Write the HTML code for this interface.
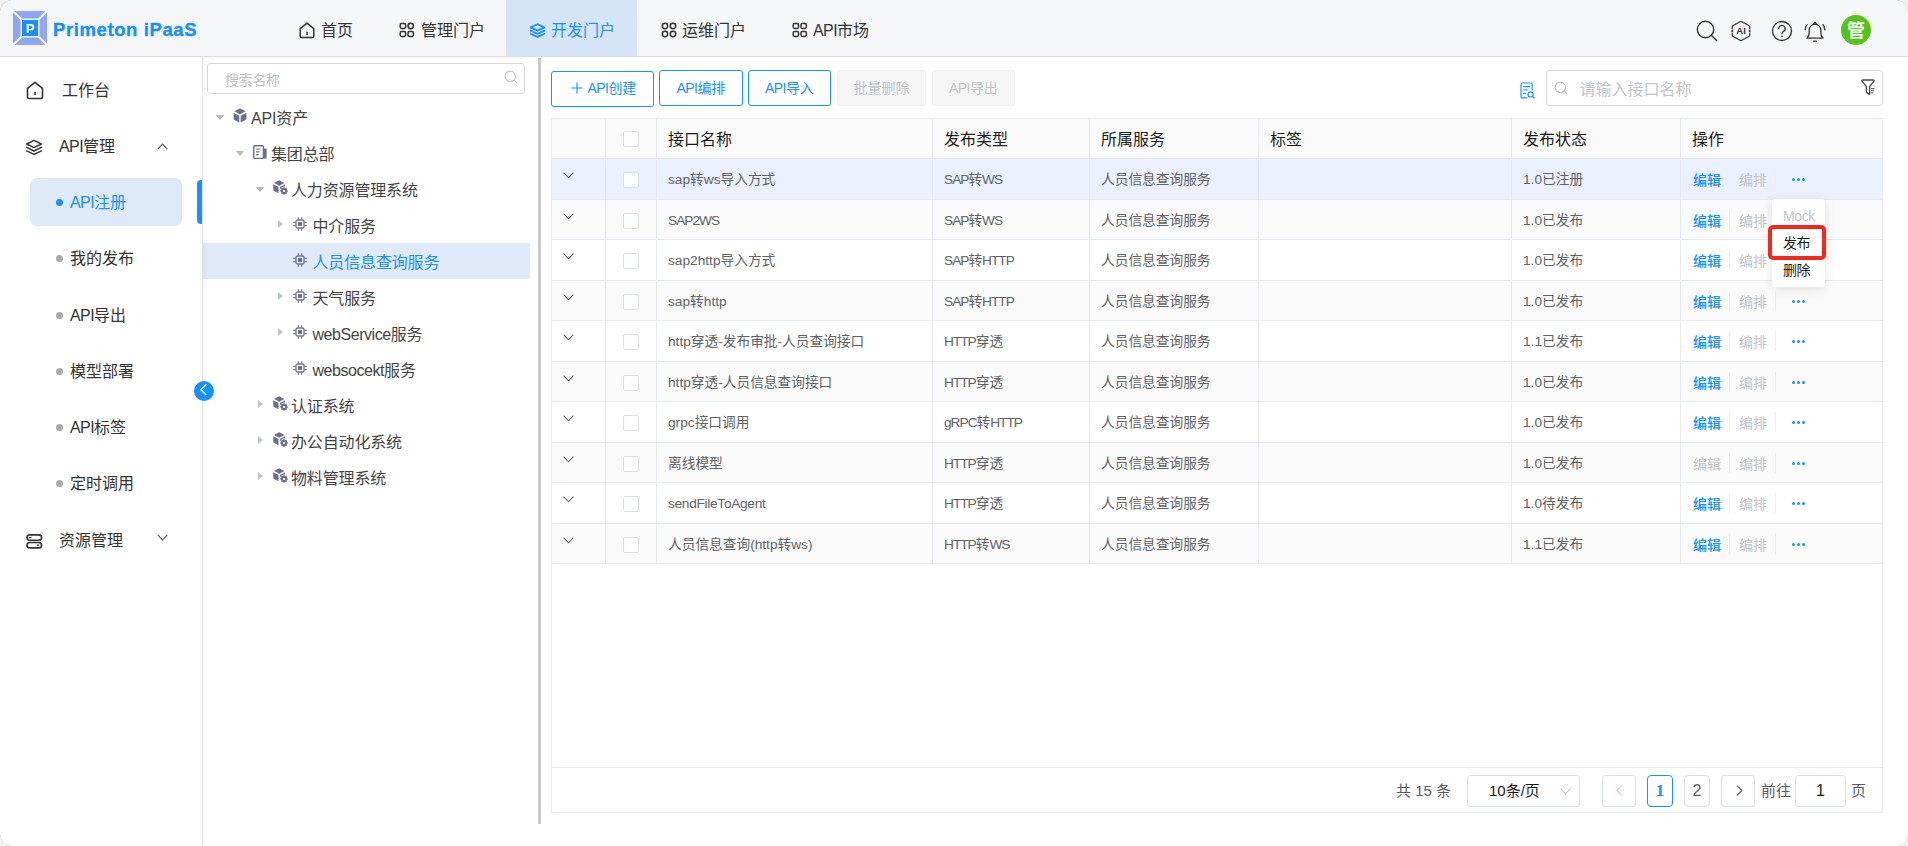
<!DOCTYPE html>
<html lang="zh-CN">
<head>
<meta charset="utf-8">
<title>Primeton iPaaS</title>
<style>
*{box-sizing:border-box;margin:0;padding:0}
html,body{width:1908px;height:846px;overflow:hidden;background:#fff}
body{font-family:"Liberation Sans","Noto Sans CJK SC",sans-serif;color:#333;position:relative;font-size:14px}
svg{display:block}
.abs{position:absolute}
/* header */
#hd{position:absolute;left:0;top:0;width:1908px;height:57px;background:#f5f6f8;border-bottom:1px solid #dcdde0;box-shadow:0 1px 2px rgba(0,0,0,.03);z-index:5}
#logo{position:absolute;left:13px;top:11px;width:34px;height:34px}
#brand{position:absolute;left:53px;top:17.5px;font-size:18.5px;font-weight:bold;color:#1890ff;line-height:24px;letter-spacing:.6px;white-space:nowrap;-webkit-text-stroke:.35px #1890ff}
.nav{position:absolute;top:3px;height:56px;line-height:56px;font-size:16px;color:#333;white-space:nowrap}
.nav svg{position:absolute;top:19px;left:0}
.nav.act{color:#1890ff}
#navbg{position:absolute;left:506px;top:0;width:131px;height:56px;background:#d5e5f7}
.hic{position:absolute;top:0}
#avatar{position:absolute;left:1841px;top:15px;width:30px;height:30px;border-radius:50%;background:#52c41a;color:#fff;font-size:18px;font-weight:bold;line-height:33px;text-align:center}
/* sidebar */
#sb{position:absolute;left:0;top:57px;width:203px;height:789px;background:#fff;border-right:1px solid #e4e5e8;box-shadow:1px 0 4px rgba(0,0,0,.06);z-index:3}
.mi{position:absolute;left:0;height:24px;line-height:26px;font-size:16px;color:#333;white-space:nowrap}
.mi svg{position:absolute}
.dot{position:absolute;left:56px;width:7px;height:7px;margin-top:-.5px;border-radius:50%;background:#aaa}
#actbg{position:absolute;left:30px;top:121px;width:152px;height:48px;border-radius:7px;background:#dfeaf8}
#actbar{position:absolute;left:197px;top:123px;width:5px;height:44px;border-radius:4px 0 0 4px;background:#1890ff}
#collapse{position:absolute;left:194px;top:381px;width:20px;height:20px;border-radius:50%;background:#1890ff;z-index:9}

/* tree */
#tp{position:absolute;left:204px;top:57px;width:334px;height:789px;background:#fff}
#tsearch{position:absolute;left:3px;top:6px;width:318px;height:31px;border:1px solid #d9d9d9;border-radius:3px;background:#fff}
#tsearch span{position:absolute;left:17px;top:6px;font-size:14px;line-height:20px;color:#bfbfbf;letter-spacing:-.3px}
#tsearch svg{position:absolute;left:296px;top:6px}
.tr{position:absolute;left:0;width:326px;height:36px;line-height:36px;font-size:16px;color:#444;white-space:nowrap;letter-spacing:-.15px}
.tr.sel{background:#dfe9f7;color:#1890ff;box-shadow:-1px 0 0 #dfe9f7}
.tr i{position:absolute;top:0;width:0;height:0}
.tr i.dn{top:16px;border-left:4.5px solid transparent;border-right:4.5px solid transparent;border-top:5px solid #b4b8c0}
.tr i.rt{top:13px;border-top:4.5px solid transparent;border-bottom:4.5px solid transparent;border-left:5.5px solid #c0c4cc}
.tr svg{position:absolute;top:11px}
.tr span{position:absolute;top:2px}
#split{position:absolute;left:538px;top:58px;width:3px;height:766px;background:#c8c8c8}

/* main */
#mn{position:absolute;left:541px;top:57px;width:1367px;height:789px;background:#fff}
.btn{position:absolute;top:13px;height:36px;border:1px solid #1890ff;border-radius:3px;color:#1890ff;font-size:14px;line-height:34px;text-align:center;background:#fff;white-space:nowrap}
.btn.b1{top:14px;line-height:32px}
u{text-decoration:none;letter-spacing:-.6px}
u.l{letter-spacing:-.45px}
.tr u{letter-spacing:-.15px}
.tr u.l{letter-spacing:-.45px}
.r u{letter-spacing:-1px}
.r u.l{letter-spacing:0}
.r.n8 u.l{letter-spacing:-.3px}
.btn.dis{border-color:#f0f0f0;background:#f5f5f5;color:#c0c4cc}
#qicon{position:absolute;left:979px;top:25px}
#qin{position:absolute;left:1005px;top:13px;width:337px;height:36px;border:1px solid #d9d9d9;border-radius:3px;background:#fff}
#qin span{position:absolute;left:32.5px;top:8px;font-size:16px;line-height:22px;color:#c0c4cc}
#qin svg{position:absolute}
#tb{position:absolute;left:10px;top:61px;width:1332px;height:695px;border:1px solid #e6e9f3}
#th{position:absolute;left:0;top:0;width:1330px;height:40px;background:#fafafa;border-bottom:1px solid #e6e9f3;font-size:16px;color:#1a1a1a}
.r{position:absolute;left:0;width:1330px;height:40.5px;border-bottom:1px solid #e6e9f3;font-size:13.7px;color:#606266;background:#fff}
.r.s{background:#fafafa}
.r.h{background:#ebf0fe}
.c{position:absolute;top:0;bottom:0;border-right:1px solid #e6e9f3;white-space:nowrap}
.c span{position:absolute;left:11px;top:11px;line-height:20px}
#th .c span{top:10px;line-height:22px}
.c1{left:0;width:54px}.c2{left:54px;width:51px}.c3{left:105px;width:276px}.c4{left:381px;width:157px}.c5{left:538px;width:169px}.c6{left:707px;width:253px}.c7{left:960px;width:169px}.c8{left:1129px;width:201px;border-right:0}
.cb{position:absolute;left:17px;top:12px;width:16px;height:16px;border:1px solid #dcdfe6;border-radius:2px;background:#fff}
.r .cb{top:13px}
.ex{position:absolute;left:11px;top:13px}
.op{position:absolute;top:11px;line-height:20px;font-size:14px}
.op.e{left:12px;color:#1890ff;font-weight:500}
.op.d{left:12px;color:#c0c4cc}
.op.p{left:58px;color:#c0c4cc}
.dv{position:absolute;top:10px;width:1px;height:20px;background:#ebeef5}
.dots{position:absolute;left:111px;top:19px;width:13px;height:3px}
.dots b{position:absolute;top:0;width:3px;height:3px;border-radius:50%;background:#1890ff}
#pop{position:absolute;left:1231px;top:142px;width:53px;height:88px;background:#fff;border-radius:3px;box-shadow:0 2px 12px rgba(0,0,0,.12);z-index:20;font-size:14px}
#pop span{position:absolute;left:11px;line-height:20px;white-space:nowrap;letter-spacing:-.4px}
#redbox{position:absolute;left:1227px;top:167.5px;width:58px;height:35px;border:4px solid #f5271c;border-radius:5px;z-index:21}
#pg{position:absolute;left:0;top:648px;width:1330px;height:45px;border-top:1px solid #e6e9f3;font-size:15px;color:#5a5c61}
#pg .t{position:absolute;top:12px;line-height:22px;white-space:nowrap}
.pb{position:absolute;top:7px;height:32px;border:1px solid #dcdfe6;border-radius:3px;background:#fff;text-align:center;line-height:29px;font-size:16px;color:#5a5c61}
.cn{position:absolute;width:11px;height:11px;z-index:50}
#c1{left:0;top:0;background:radial-gradient(circle at 100% 100%,rgba(0,0,0,0) 9.6px,rgba(0,0,0,.1) 10.4px,#f2f2f2 11.4px)}
#c2{right:0;top:0;background:radial-gradient(circle at 0 100%,rgba(0,0,0,0) 9.6px,rgba(0,0,0,.1) 10.4px,#f2f2f2 11.4px)}
#c3{left:0;bottom:0;background:radial-gradient(circle at 100% 0,rgba(0,0,0,0) 9.6px,rgba(0,0,0,.1) 10.4px,#f2f2f2 11.4px)}
#c4{right:0;bottom:0;background:radial-gradient(circle at 0 0,rgba(0,0,0,0) 9.6px,rgba(0,0,0,.1) 10.4px,#f2f2f2 11.4px)}
</style>
</head>
<body>
<!-- HEADER -->
<div id="hd">
  <svg id="logo" viewBox="0 0 34 34">
    <rect x="0" y="0" width="34" height="34" rx="3" fill="#8fa6f7"/>
    <path d="M0 1.5 L1.5 0 L17 15.5 L32.5 0 L34 1.5 L18.5 17 L34 32.5 L32.5 34 L17 18.5 L1.5 34 L0 32.5 L15.5 17 Z" fill="#f5f6f8"/>
    <rect x="7.5" y="7.5" width="19" height="19" fill="#f5f6f8"/>
    <rect x="9" y="9" width="16" height="16" fill="#1890ff"/>
    <text x="17" y="22" font-size="13" font-weight="bold" fill="#fff" text-anchor="middle" font-family="Liberation Sans, sans-serif">P</text>
  </svg>
  <div id="brand">Primeton iPaaS</div>
  <div id="navbg"></div>
  <div class="nav" style="left:299px;padding-left:22px">
    <svg width="16" height="17" viewBox="0 0 16 17" fill="none" stroke="#333" stroke-width="1.5" stroke-linejoin="round"><path d="M1.2 6.6 L8 1.2 L14.8 6.6 V14.2 a1.4 1.4 0 0 1 -1.4 1.4 H2.6 a1.4 1.4 0 0 1 -1.4 -1.4 Z"/><path d="M8 10.2 V12.4" stroke-linecap="round"/></svg>首页</div>
  <div class="nav" style="left:399px;padding-left:22px">
    <svg width="16" height="16" viewBox="0 0 16 16" fill="none" stroke="#333" stroke-width="1.5"><rect x="1.2" y="1.5" width="5.4" height="5" rx="1.4"/><circle cx="11.7" cy="4" r="2.7"/><rect x="1.2" y="9.5" width="5.4" height="5" rx="1.4"/><rect x="9" y="9.5" width="5.4" height="5" rx="1.4"/></svg>管理门户</div>
  <div class="nav act" style="left:530px;padding-left:21px">
    <svg style="left:-1px;top:19.5px" width="17" height="15" viewBox="0 0 17 15" fill="none" stroke="#1890ff" stroke-width="1.8" stroke-linejoin="round" stroke-linecap="round"><path d="M8.5 1.2 L15.5 4.4 L8.5 7.6 L1.5 4.4 Z"/><path d="M1.5 7.6 L8.5 10.8 L15.5 7.6"/><path d="M1.5 10.7 L8.5 13.9 L15.5 10.7"/></svg>开发门户</div>
  <div class="nav" style="left:661px;padding-left:21px">
    <svg width="16" height="16" viewBox="0 0 16 16" fill="none" stroke="#333" stroke-width="1.5"><circle cx="4" cy="4" r="2.7"/><circle cx="12" cy="4" r="2.7"/><circle cx="4" cy="12" r="2.7"/><circle cx="12" cy="12" r="2.7"/></svg>运维门户</div>
  <div class="nav" style="left:792px;padding-left:21px">
    <svg width="16" height="16" viewBox="0 0 16 16" fill="none" stroke="#333" stroke-width="1.5"><rect x="1.2" y="1.5" width="5.4" height="5" rx="1.4"/><rect x="9" y="1.5" width="5.4" height="5" rx="1.4"/><rect x="1.2" y="9.5" width="5.4" height="5" rx="1.4"/><rect x="9" y="9.5" width="5.4" height="5" rx="1.4"/></svg><u>API</u>市场</div>

  <!-- right icons -->
  <svg class="hic" style="left:1695px;top:19px" width="24" height="24" viewBox="0 0 24 24" fill="none" stroke="#333" stroke-width="1.4" stroke-linecap="round"><circle cx="10.5" cy="10.5" r="8.2"/><path d="M16.6 16.6 L21.8 21.8"/></svg>
  <svg class="hic" style="left:1730px;top:20px" width="22" height="22" viewBox="0 0 22 22" fill="none" stroke="#333" stroke-width="1.2" stroke-linejoin="round"><path d="M11 1.2 L19.7 6 V9.4 M19.7 12.6 V16 L11 20.8 L2.3 16 V12.6 M2.3 9.4 V6 L11 1.2"/><circle cx="2.3" cy="11" r="1.1" fill="#333" stroke="none"/><circle cx="19.7" cy="11" r="1.1" fill="#333" stroke="none"/><text x="11" y="14.4" font-size="9.6" font-weight="bold" fill="#333" stroke="none" text-anchor="middle" font-family="Liberation Sans, sans-serif">AI</text></svg>
  <svg class="hic" style="left:1771px;top:20px" width="22" height="22" viewBox="0 0 22 22" fill="none" stroke="#333" stroke-width="1.3" stroke-linecap="round"><circle cx="11" cy="11" r="9.5"/><path d="M7.8 8.6 a3.2 3.2 0 1 1 4.6 2.9 c-1 .55 -1.4 1.1 -1.4 2.2"/><circle cx="11" cy="16.3" r=".9" fill="#333" stroke="none"/></svg>
  <svg class="hic" style="left:1804px;top:20px" width="22" height="24" viewBox="0 0 22 24" fill="none" stroke="#333" stroke-width="1.3" stroke-linecap="round" stroke-linejoin="round"><path d="M3 18.2 c1.6 -1.6 2.2 -3 2.2 -6 V10 a5.8 5.8 0 0 1 11.6 0 V12.2 c0 3 .6 4.4 2.2 6 Z"/><path d="M9.6 21.2 h2.8"/><circle cx="11" cy="3.4" r="1"/><path d="M3 4.6 c-1.1 1.5 -1.7 3.2 -1.8 5.2"/><path d="M19 4.6 c1.1 1.5 1.7 3.2 1.8 5.2"/></svg>
  <div id="avatar">管</div>
</div>

<!-- SIDEBAR -->
<div id="sb">
  <div id="actbg"></div><div id="actbar"></div>
  <div class="mi" style="top:21px;padding-left:62px"><svg style="left:26px;top:3px" width="18" height="19" viewBox="0 0 18 19" fill="none" stroke="#333" stroke-width="1.6" stroke-linejoin="round"><path d="M1.5 7.4 L9 1.4 L16.5 7.4 V16 a1.5 1.5 0 0 1 -1.5 1.5 H3 a1.5 1.5 0 0 1 -1.5 -1.5 Z"/><path d="M9 11.4 V13.6" stroke-linecap="round"/></svg>工作台</div>
  <div class="mi" style="top:77px;padding-left:59px"><svg style="left:25px;top:5px" width="18" height="17" viewBox="0 0 18 17" fill="none" stroke="#333" stroke-width="1.5" stroke-linejoin="round" stroke-linecap="round"><path d="M9 1.4 L16.4 5 L9 8.6 L1.6 5 Z"/><path d="M1.6 8.4 L9 12 L16.4 8.4"/><path d="M1.6 11.8 L9 15.4 L16.4 11.8"/></svg><u>API</u>管理<svg style="left:157px;top:9px" width="11" height="7" viewBox="0 0 11 7" fill="none" stroke="#555" stroke-width="1.2"><path d="M.8 6.2 L5.5 1.2 L10.2 6.2"/></svg></div>
  <div class="dot" style="top:142px;background:#1890ff"></div>
  <div class="mi" style="top:133px;padding-left:70px;color:#1890ff"><u>API</u>注册</div>
  <div class="dot" style="top:198px"></div>
  <div class="mi" style="top:189px;padding-left:70px">我的发布</div>
  <div class="dot" style="top:255px"></div>
  <div class="mi" style="top:246px;padding-left:70px"><u>API</u>导出</div>
  <div class="dot" style="top:311px"></div>
  <div class="mi" style="top:302px;padding-left:70px">模型部署</div>
  <div class="dot" style="top:367px"></div>
  <div class="mi" style="top:358px;padding-left:70px"><u>API</u>标签</div>
  <div class="dot" style="top:423px"></div>
  <div class="mi" style="top:414px;padding-left:70px">定时调用</div>
  <div class="mi" style="top:471px;padding-left:59px"><svg style="left:26px;top:6px" width="17" height="15" viewBox="0 0 17 15" fill="none" stroke="#333" stroke-width="1.6"><rect x="1" y=".9" width="14.6" height="5.4" rx="2.7"/><rect x="1" y="8.5" width="14.6" height="5.4" rx="2.7"/><path d="M3.6 3.6 h1.4 M11.4 11.2 h1.4" stroke-linecap="round" stroke-width="1.3"/></svg>资源管理<svg style="left:157px;top:6px" width="11" height="7" viewBox="0 0 11 7" fill="none" stroke="#555" stroke-width="1.2"><path d="M.8 .8 L5.5 5.8 L10.2 .8"/></svg></div>
</div>
<div id="collapse"><svg width="20" height="20" viewBox="0 0 20 20" fill="none" stroke="#fff" stroke-width="1.3" stroke-linecap="round" stroke-linejoin="round"><path d="M11.9 3.8 L6.9 8.7 L11.9 13.6"/></svg></div>

<div id="tp">
  <div id="tsearch"><span>搜索名称</span><svg width="14" height="14" viewBox="0 0 14 14" fill="none" stroke="#c0c4cc" stroke-width="1.2" stroke-linecap="round"><circle cx="6.3" cy="6.3" r="5.2"/><path d="M10.2 10.2 L12.6 12.6"/></svg></div>
  <div class="tr" style="top:42px"><i class="dn" style="left:12px"></i><svg style="left:29px;top:9px" width="14" height="15" viewBox="0 0 14 15" fill="#6a6f8f"><path d="M7 0.2 L12.6 3.3 L7 6.4 L1.4 3.3 Z"/><path d="M0.6 4.7 L6.3 7.8 V14.6 L0.6 11.5 Z"/><path d="M13.4 4.7 L7.7 7.8 V14.6 L13.4 11.5 Z"/></svg><span style="left:47px"><u>API</u>资产</span></div>
  <div class="tr" style="top:78px"><i class="dn" style="left:32px"></i><svg style="left:49px;top:10px" width="14" height="14" viewBox="0 0 14 14"><path d="M10.5 3.6 H13.6 V13.6 H10.5 Z" fill="#6a6f8f"/><rect x="0.8" y="0.8" width="9.6" height="12.6" rx="1" fill="#fff" stroke="#6a6f8f" stroke-width="1.4"/><path d="M3 4 H7.6 M3 6.8 H6.4 M3 9.6 H5.6" stroke="#6a6f8f" stroke-width="1.2"/></svg><span style="left:67px">集团总部</span></div>
  <div class="tr" style="top:114px"><i class="dn" style="left:52px"></i><svg style="left:69px;top:9px" width="15" height="15" viewBox="0 0 15 15" fill="#6a6f8f"><path d="M6.2 0.3 L11.4 3 L6.2 5.7 L1 3 Z"/><path d="M0.3 4.3 L5.5 7 V13.2 L0.3 10.5 Z"/><path d="M6.9 7 L12.1 4.3 V6.6 C9.2 6.4 6.9 8.6 6.9 11.2 Z"/><circle cx="11" cy="11" r="2.3" fill="none" stroke="#6a6f8f" stroke-width="1.7"/><path d="M11 7.3 V14.7 M7.3 11 H14.7 M8.4 8.4 L13.6 13.6 M13.6 8.4 L8.4 13.6" stroke="#6a6f8f" stroke-width="1.3" fill="none"/><circle cx="11" cy="11" r="1.1" fill="#fff"/></svg><span style="left:87px">人力资源管理系统</span></div>
  <div class="tr" style="top:150px"><i class="rt" style="left:74px"></i><svg style="left:89px;top:10px" width="14" height="14" viewBox="0 0 14 14" fill="none" stroke="#6a6f8f"><rect x="3" y="3" width="8" height="8" rx="1.6" stroke-width="1.3"/><rect x="5" y="5" width="4" height="4" fill="#6a6f8f" stroke="none"/><path d="M5.4 0.2 V2.6 M8.6 0.2 V2.6 M5.4 11.4 V13.8 M8.6 11.4 V13.8 M0.2 5.4 H2.6 M0.2 8.6 H2.6 M11.4 5.4 H13.8 M11.4 8.6 H13.8" stroke-width="1.2"/></svg><span style="left:108.5px">中介服务</span></div>
  <div class="tr sel" style="top:186px"><svg style="left:89px;top:10px" width="14" height="14" viewBox="0 0 14 14" fill="none" stroke="#6a6f8f"><rect x="3" y="3" width="8" height="8" rx="1.6" stroke-width="1.3"/><rect x="5" y="5" width="4" height="4" fill="#6a6f8f" stroke="none"/><path d="M5.4 0.2 V2.6 M8.6 0.2 V2.6 M5.4 11.4 V13.8 M8.6 11.4 V13.8 M0.2 5.4 H2.6 M0.2 8.6 H2.6 M11.4 5.4 H13.8 M11.4 8.6 H13.8" stroke-width="1.2"/></svg><span style="left:108.5px">人员信息查询服务</span></div>
  <div class="tr" style="top:222px"><i class="rt" style="left:74px"></i><svg style="left:89px;top:10px" width="14" height="14" viewBox="0 0 14 14" fill="none" stroke="#6a6f8f"><rect x="3" y="3" width="8" height="8" rx="1.6" stroke-width="1.3"/><rect x="5" y="5" width="4" height="4" fill="#6a6f8f" stroke="none"/><path d="M5.4 0.2 V2.6 M8.6 0.2 V2.6 M5.4 11.4 V13.8 M8.6 11.4 V13.8 M0.2 5.4 H2.6 M0.2 8.6 H2.6 M11.4 5.4 H13.8 M11.4 8.6 H13.8" stroke-width="1.2"/></svg><span style="left:108.5px">天气服务</span></div>
  <div class="tr" style="top:258px"><i class="rt" style="left:74px"></i><svg style="left:89px;top:10px" width="14" height="14" viewBox="0 0 14 14" fill="none" stroke="#6a6f8f"><rect x="3" y="3" width="8" height="8" rx="1.6" stroke-width="1.3"/><rect x="5" y="5" width="4" height="4" fill="#6a6f8f" stroke="none"/><path d="M5.4 0.2 V2.6 M8.6 0.2 V2.6 M5.4 11.4 V13.8 M8.6 11.4 V13.8 M0.2 5.4 H2.6 M0.2 8.6 H2.6 M11.4 5.4 H13.8 M11.4 8.6 H13.8" stroke-width="1.2"/></svg><span style="left:108.5px"><u class="l">webService</u>服务</span></div>
  <div class="tr" style="top:294px"><svg style="left:89px;top:10px" width="14" height="14" viewBox="0 0 14 14" fill="none" stroke="#6a6f8f"><rect x="3" y="3" width="8" height="8" rx="1.6" stroke-width="1.3"/><rect x="5" y="5" width="4" height="4" fill="#6a6f8f" stroke="none"/><path d="M5.4 0.2 V2.6 M8.6 0.2 V2.6 M5.4 11.4 V13.8 M8.6 11.4 V13.8 M0.2 5.4 H2.6 M0.2 8.6 H2.6 M11.4 5.4 H13.8 M11.4 8.6 H13.8" stroke-width="1.2"/></svg><span style="left:108.5px"><u class="l">websocekt</u>服务</span></div>
  <div class="tr" style="top:330px"><i class="rt" style="left:54px"></i><svg style="left:69px;top:9px" width="15" height="15" viewBox="0 0 15 15" fill="#6a6f8f"><path d="M6.2 0.3 L11.4 3 L6.2 5.7 L1 3 Z"/><path d="M0.3 4.3 L5.5 7 V13.2 L0.3 10.5 Z"/><path d="M6.9 7 L12.1 4.3 V6.6 C9.2 6.4 6.9 8.6 6.9 11.2 Z"/><circle cx="11" cy="11" r="2.3" fill="none" stroke="#6a6f8f" stroke-width="1.7"/><path d="M11 7.3 V14.7 M7.3 11 H14.7 M8.4 8.4 L13.6 13.6 M13.6 8.4 L8.4 13.6" stroke="#6a6f8f" stroke-width="1.3" fill="none"/><circle cx="11" cy="11" r="1.1" fill="#fff"/></svg><span style="left:87px">认证系统</span></div>
  <div class="tr" style="top:366px"><i class="rt" style="left:54px"></i><svg style="left:69px;top:9px" width="15" height="15" viewBox="0 0 15 15" fill="#6a6f8f"><path d="M6.2 0.3 L11.4 3 L6.2 5.7 L1 3 Z"/><path d="M0.3 4.3 L5.5 7 V13.2 L0.3 10.5 Z"/><path d="M6.9 7 L12.1 4.3 V6.6 C9.2 6.4 6.9 8.6 6.9 11.2 Z"/><circle cx="11" cy="11" r="2.3" fill="none" stroke="#6a6f8f" stroke-width="1.7"/><path d="M11 7.3 V14.7 M7.3 11 H14.7 M8.4 8.4 L13.6 13.6 M13.6 8.4 L8.4 13.6" stroke="#6a6f8f" stroke-width="1.3" fill="none"/><circle cx="11" cy="11" r="1.1" fill="#fff"/></svg><span style="left:87px">办公自动化系统</span></div>
  <div class="tr" style="top:402px"><i class="rt" style="left:54px"></i><svg style="left:69px;top:9px" width="15" height="15" viewBox="0 0 15 15" fill="#6a6f8f"><path d="M6.2 0.3 L11.4 3 L6.2 5.7 L1 3 Z"/><path d="M0.3 4.3 L5.5 7 V13.2 L0.3 10.5 Z"/><path d="M6.9 7 L12.1 4.3 V6.6 C9.2 6.4 6.9 8.6 6.9 11.2 Z"/><circle cx="11" cy="11" r="2.3" fill="none" stroke="#6a6f8f" stroke-width="1.7"/><path d="M11 7.3 V14.7 M7.3 11 H14.7 M8.4 8.4 L13.6 13.6 M13.6 8.4 L8.4 13.6" stroke="#6a6f8f" stroke-width="1.3" fill="none"/><circle cx="11" cy="11" r="1.1" fill="#fff"/></svg><span style="left:87px">物料管理系统</span></div>
</div>
<div id="split"></div>
<div id="mn">
  <div class="btn b1" style="left:10px;width:103px"><svg style="position:absolute;left:19px;top:10px" width="12" height="12" viewBox="0 0 12 12" stroke="#1890ff" stroke-width="1.1"><path d="M6 0.5 V11.5 M0.5 6 H11.5"/></svg><span style="padding-left:19px"><u>API</u>创建</span></div>
  <div class="btn" style="left:118px;width:84px"><u>API</u>编排</div>
  <div class="btn" style="left:207px;width:83px"><u>API</u>导入</div>
  <div class="btn dis" style="left:296px;width:89px">批量删除</div>
  <div class="btn dis" style="left:391px;width:83px"><u>API</u>导出</div>
  <svg id="qicon" width="15" height="17" viewBox="0 0 15 17" fill="none" stroke="#1890ff" stroke-width="1.15" stroke-linecap="round"><path d="M7 15.8 H2.2 a1.2 1.2 0 0 1 -1.2 -1.2 V2.2 a1.2 1.2 0 0 1 1.2 -1.2 H11 a1.2 1.2 0 0 1 1.2 1.2 V8"/><path d="M3.6 4.6 H9.6 M3.6 8 H7.4 M3.6 11.4 H5.4"/><circle cx="10.6" cy="12.4" r="2.6"/><path d="M12.6 14.4 L14.2 16"/></svg>
  <div id="qin"><svg style="left:7px;top:10px" width="14" height="14" viewBox="0 0 14 14" fill="none" stroke="#c0c4cc" stroke-width="1.2" stroke-linecap="round"><circle cx="6.3" cy="6.3" r="5.2"/><path d="M10.2 10.2 L12.6 12.6"/></svg><span>请输入接口名称</span><svg style="left:314px;top:8px" width="14" height="17" viewBox="0 0 14 17" fill="none" stroke="#4a4a4a" stroke-width="1.4" stroke-linejoin="round" stroke-linecap="round"><path d="M1.6 1 H12.4 a.7 .7 0 0 1 .55 1.1 L8.6 7.6 V15.4 L5.4 13.4 V7.6 L1.05 2.1 A.7 .7 0 0 1 1.6 1 Z"/><path d="M10.4 9.6 H13 M10.4 11.7 H12.6 M10.4 13.8 H12" stroke-width="1"/></svg></div>
  <div id="tb">
    <div id="th"><div class="c c1"></div><div class="c c2"><div class="cb"></div></div><div class="c c3"><span>接口名称</span></div><div class="c c4"><span>发布类型</span></div><div class="c c5"><span>所属服务</span></div><div class="c c6"><span>标签</span></div><div class="c c7"><span>发布状态</span></div><div class="c c8"><span>操作</span></div></div>
    <div class="r h n0" style="top:40px"><div class="c c1"><svg class="ex" width="11" height="7" viewBox="0 0 11 7" fill="none" stroke="#606266" stroke-width="1.1"><path d="M.6 .7 L5.5 5.8 L10.4 .7"/></svg></div><div class="c c2"><div class="cb"></div></div><div class="c c3"><span><u class="l">sap</u>转<u class="l">ws</u>导入方式</span></div><div class="c c4"><span><u>SAP</u>转<u>WS</u></span></div><div class="c c5"><span>人员信息查询服务</span></div><div class="c c6"></div><div class="c c7"><span>1.0已注册</span></div><div class="c c8"><div class="op e">编辑</div><div class="dv" style="left:48px"></div><div class="op p">编排</div><div class="dv" style="left:94px"></div><div class="dots"><b style="left:0"></b><b style="left:5px"></b><b style="left:10px"></b></div></div></div>
    <div class="r s n1" style="top:80.5px"><div class="c c1"><svg class="ex" width="11" height="7" viewBox="0 0 11 7" fill="none" stroke="#606266" stroke-width="1.1"><path d="M.6 .7 L5.5 5.8 L10.4 .7"/></svg></div><div class="c c2"><div class="cb"></div></div><div class="c c3"><span><u>SAP2WS</u></span></div><div class="c c4"><span><u>SAP</u>转<u>WS</u></span></div><div class="c c5"><span>人员信息查询服务</span></div><div class="c c6"></div><div class="c c7"><span>1.0已发布</span></div><div class="c c8"><div class="op e">编辑</div><div class="dv" style="left:48px"></div><div class="op p">编排</div><div class="dv" style="left:94px"></div><div class="dots"><b style="left:0"></b><b style="left:5px"></b><b style="left:10px"></b></div></div></div>
    <div class="r n2" style="top:121px"><div class="c c1"><svg class="ex" width="11" height="7" viewBox="0 0 11 7" fill="none" stroke="#606266" stroke-width="1.1"><path d="M.6 .7 L5.5 5.8 L10.4 .7"/></svg></div><div class="c c2"><div class="cb"></div></div><div class="c c3"><span><u class="l">sap2http</u>导入方式</span></div><div class="c c4"><span><u>SAP</u>转<u>HTTP</u></span></div><div class="c c5"><span>人员信息查询服务</span></div><div class="c c6"></div><div class="c c7"><span>1.0已发布</span></div><div class="c c8"><div class="op e">编辑</div><div class="dv" style="left:48px"></div><div class="op p">编排</div><div class="dv" style="left:94px"></div><div class="dots"><b style="left:0"></b><b style="left:5px"></b><b style="left:10px"></b></div></div></div>
    <div class="r s n3" style="top:161.5px"><div class="c c1"><svg class="ex" width="11" height="7" viewBox="0 0 11 7" fill="none" stroke="#606266" stroke-width="1.1"><path d="M.6 .7 L5.5 5.8 L10.4 .7"/></svg></div><div class="c c2"><div class="cb"></div></div><div class="c c3"><span><u class="l">sap</u>转<u class="l">http</u></span></div><div class="c c4"><span><u>SAP</u>转<u>HTTP</u></span></div><div class="c c5"><span>人员信息查询服务</span></div><div class="c c6"></div><div class="c c7"><span>1.0已发布</span></div><div class="c c8"><div class="op e">编辑</div><div class="dv" style="left:48px"></div><div class="op p">编排</div><div class="dv" style="left:94px"></div><div class="dots"><b style="left:0"></b><b style="left:5px"></b><b style="left:10px"></b></div></div></div>
    <div class="r n4" style="top:202px"><div class="c c1"><svg class="ex" width="11" height="7" viewBox="0 0 11 7" fill="none" stroke="#606266" stroke-width="1.1"><path d="M.6 .7 L5.5 5.8 L10.4 .7"/></svg></div><div class="c c2"><div class="cb"></div></div><div class="c c3"><span><u class="l">http</u>穿透-发布审批-人员查询接口</span></div><div class="c c4"><span><u>HTTP</u>穿透</span></div><div class="c c5"><span>人员信息查询服务</span></div><div class="c c6"></div><div class="c c7"><span>1.1已发布</span></div><div class="c c8"><div class="op e">编辑</div><div class="dv" style="left:48px"></div><div class="op p">编排</div><div class="dv" style="left:94px"></div><div class="dots"><b style="left:0"></b><b style="left:5px"></b><b style="left:10px"></b></div></div></div>
    <div class="r s n5" style="top:242.5px"><div class="c c1"><svg class="ex" width="11" height="7" viewBox="0 0 11 7" fill="none" stroke="#606266" stroke-width="1.1"><path d="M.6 .7 L5.5 5.8 L10.4 .7"/></svg></div><div class="c c2"><div class="cb"></div></div><div class="c c3"><span><u class="l">http</u>穿透-人员信息查询接口</span></div><div class="c c4"><span><u>HTTP</u>穿透</span></div><div class="c c5"><span>人员信息查询服务</span></div><div class="c c6"></div><div class="c c7"><span>1.0已发布</span></div><div class="c c8"><div class="op e">编辑</div><div class="dv" style="left:48px"></div><div class="op p">编排</div><div class="dv" style="left:94px"></div><div class="dots"><b style="left:0"></b><b style="left:5px"></b><b style="left:10px"></b></div></div></div>
    <div class="r n6" style="top:283px"><div class="c c1"><svg class="ex" width="11" height="7" viewBox="0 0 11 7" fill="none" stroke="#606266" stroke-width="1.1"><path d="M.6 .7 L5.5 5.8 L10.4 .7"/></svg></div><div class="c c2"><div class="cb"></div></div><div class="c c3"><span><u class="l">grpc</u>接口调用</span></div><div class="c c4"><span><u>gRPC</u>转<u>HTTP</u></span></div><div class="c c5"><span>人员信息查询服务</span></div><div class="c c6"></div><div class="c c7"><span>1.0已发布</span></div><div class="c c8"><div class="op e">编辑</div><div class="dv" style="left:48px"></div><div class="op p">编排</div><div class="dv" style="left:94px"></div><div class="dots"><b style="left:0"></b><b style="left:5px"></b><b style="left:10px"></b></div></div></div>
    <div class="r s n7" style="top:323.5px"><div class="c c1"><svg class="ex" width="11" height="7" viewBox="0 0 11 7" fill="none" stroke="#606266" stroke-width="1.1"><path d="M.6 .7 L5.5 5.8 L10.4 .7"/></svg></div><div class="c c2"><div class="cb"></div></div><div class="c c3"><span>离线模型</span></div><div class="c c4"><span><u>HTTP</u>穿透</span></div><div class="c c5"><span>人员信息查询服务</span></div><div class="c c6"></div><div class="c c7"><span>1.0已发布</span></div><div class="c c8"><div class="op d">编辑</div><div class="dv" style="left:48px"></div><div class="op p">编排</div><div class="dv" style="left:94px"></div><div class="dots"><b style="left:0"></b><b style="left:5px"></b><b style="left:10px"></b></div></div></div>
    <div class="r n8" style="top:364px"><div class="c c1"><svg class="ex" width="11" height="7" viewBox="0 0 11 7" fill="none" stroke="#606266" stroke-width="1.1"><path d="M.6 .7 L5.5 5.8 L10.4 .7"/></svg></div><div class="c c2"><div class="cb"></div></div><div class="c c3"><span><u class="l">sendFileToAgent</u></span></div><div class="c c4"><span><u>HTTP</u>穿透</span></div><div class="c c5"><span>人员信息查询服务</span></div><div class="c c6"></div><div class="c c7"><span>1.0待发布</span></div><div class="c c8"><div class="op e">编辑</div><div class="dv" style="left:48px"></div><div class="op p">编排</div><div class="dv" style="left:94px"></div><div class="dots"><b style="left:0"></b><b style="left:5px"></b><b style="left:10px"></b></div></div></div>
    <div class="r s n9" style="top:404.5px"><div class="c c1"><svg class="ex" width="11" height="7" viewBox="0 0 11 7" fill="none" stroke="#606266" stroke-width="1.1"><path d="M.6 .7 L5.5 5.8 L10.4 .7"/></svg></div><div class="c c2"><div class="cb"></div></div><div class="c c3"><span>人员信息查询(<u class="l">http</u>转<u class="l">ws</u>)</span></div><div class="c c4"><span><u>HTTP</u>转<u>WS</u></span></div><div class="c c5"><span>人员信息查询服务</span></div><div class="c c6"></div><div class="c c7"><span>1.1已发布</span></div><div class="c c8"><div class="op e">编辑</div><div class="dv" style="left:48px"></div><div class="op p">编排</div><div class="dv" style="left:94px"></div><div class="dots"><b style="left:0"></b><b style="left:5px"></b><b style="left:10px"></b></div></div></div>
    <div id="pg"><div class="t" style="left:844px">共 15 条</div><div class="pb" style="left:915px;width:113px;color:#1a1a1a;text-align:left;padding-left:21px;font-size:15px">10条/页<svg style="position:absolute;left:92px;top:12px" width="11" height="7" viewBox="0 0 11 7" fill="none" stroke="#c0c4cc" stroke-width="1.1"><path d="M.6 .7 L5.5 5.8 L10.4 .7"/></svg></div><div class="pb" style="left:1050px;width:34px"><svg style="position:absolute;left:13px;top:9px" width="7" height="11" viewBox="0 0 7 11" fill="none" stroke="#d0d3da" stroke-width="1.2"><path d="M6 .6 L1 5.5 L6 10.4"/></svg></div><div class="pb" style="left:1095px;width:26px;border-color:#1890ff;color:#1890ff;font-weight:bold;border-radius:4px;font-family:Liberation Serif,serif;font-size:17px">1</div><div class="pb" style="left:1132px;width:26px;border-radius:4px">2</div><div class="pb" style="left:1169px;width:34px"><svg style="position:absolute;left:14px;top:9px" width="7" height="11" viewBox="0 0 7 11" fill="none" stroke="#5a5c61" stroke-width="1.2"><path d="M1 .6 L6 5.5 L1 10.4"/></svg></div><div class="t" style="left:1209px">前往</div><div class="pb" style="left:1243px;width:51px;color:#1a1a1a">1</div><div class="t" style="left:1299px">页</div></div>
  </div>
  <div id="pop"><span style="top:7px;color:#c0c4cc">Mock</span><span style="top:34px;color:#1a1a1a">发布</span><span style="top:61px;color:#1a1a1a">删除</span></div>
  <div id="redbox"></div>
</div>
<div class="cn" id="c1"></div><div class="cn" id="c2"></div><div class="cn" id="c3"></div><div class="cn" id="c4"></div>
</body>
</html>
